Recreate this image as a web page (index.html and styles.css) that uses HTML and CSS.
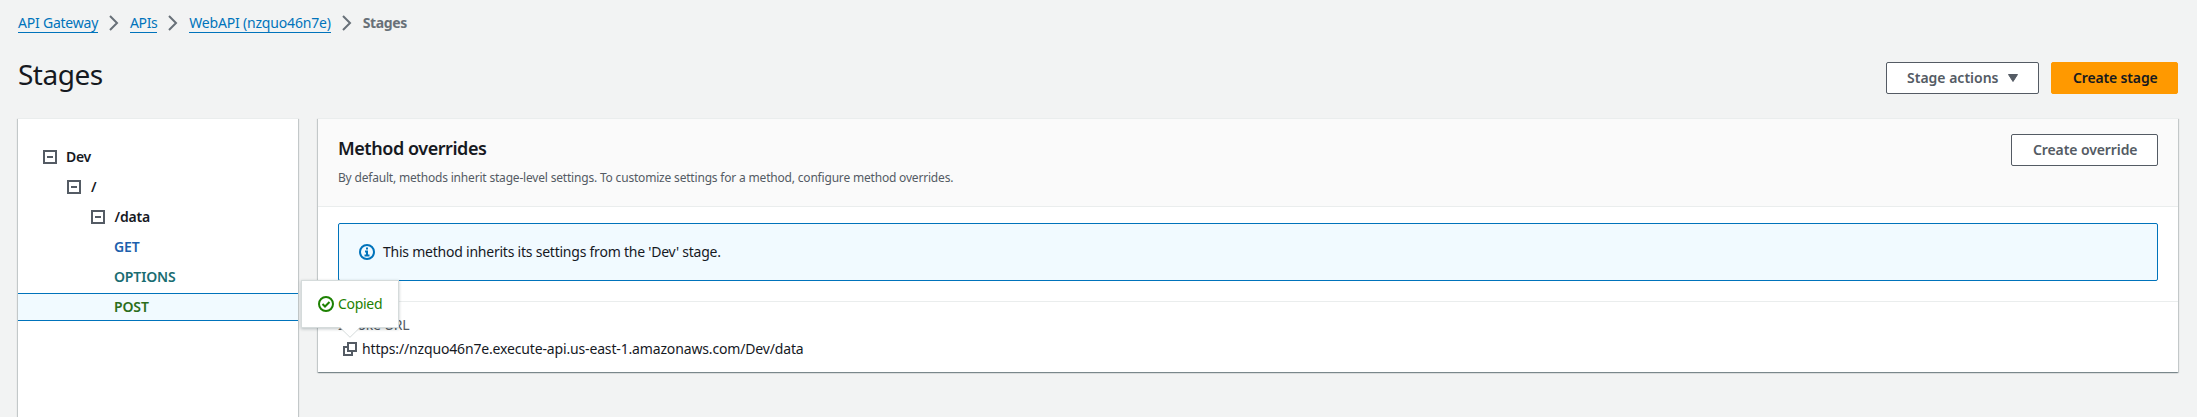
FILE: index.html
```
<!DOCTYPE html>
<html lang="en">
<head>
<meta charset="utf-8">
<title>Stages</title>
<link rel="stylesheet" href="styles.css">
</head>
<body>
<nav class="crumbs">
  <a class="c1" href="#">API Gateway</a>
  <svg class="chev" viewBox="0 0 10 16"><path d="M1 1l7 7-7 7"/></svg>
  <a class="c2" href="#">APIs</a>
  <svg class="chev" viewBox="0 0 10 16"><path d="M1 1l7 7-7 7"/></svg>
  <a class="c3" href="#">WebAPI (nzquo46n7e)</a>
  <svg class="chev" viewBox="0 0 10 16"><path d="M1 1l7 7-7 7"/></svg>
  <span class="current">Stages</span>
</nav>
<header class="page-head">
  <h1 class="title">Stages</h1>
  <div class="actions">
    <button class="btn btn-actions">Stage actions<svg class="caret" viewBox="0 0 10 8"><path d="M.5.5h9L5 7.500z"/></svg></button>
    <button class="btn primary">Create stage</button>
  </div>
</header>
<div class="columns">
  <aside class="panel tree">
    <div class="node d0"><svg class="toggle" viewBox="0 0 14 14"><path d="M1 1h12v12H1zM4 7h6"/></svg><span class="t-dev">Dev</span></div>
    <div class="node d1"><svg class="toggle" viewBox="0 0 14 14"><path d="M1 1h12v12H1zM4 7h6"/></svg><span>/</span></div>
    <div class="node d2"><svg class="toggle" viewBox="0 0 14 14"><path d="M1 1h12v12H1zM4 7h6"/></svg><span class="t-data">/data</span></div>
    <div class="node leaf get">GET</div>
    <div class="node leaf options">OPTIONS</div>
    <div class="node leaf post">POST</div>
  </aside>
  <main class="panel detail">
    <div class="detail-head">
      <div>
        <h2 class="subtitle">Method overrides</h2>
        <p class="desc">By default, methods inherit stage-level settings. To customize settings for a method, configure method overrides.</p>
      </div>
      <button class="btn override">Create override</button>
    </div>
    <div class="alert">
      <svg class="info" viewBox="0 0 16 16"><circle cx="8" cy="8" r="7"/><path d="M8 3.500v2M6 7.500h2V11.500M5.500 11.500h5"/></svg>
      <span class="alert-text">This method inherits its settings from the 'Dev' stage.</span>
    </div>
    <div class="invoke">
      <div class="label">Invoke URL</div>
      <div class="url">
        <span class="copy">
          <svg class="copy-icon" viewBox="0 0 14 14"><path d="M5 1h8v8H5zM5 5H1v8h8V9"/></svg>
          <span class="tooltip">
            <svg class="check" viewBox="0 0 16 16"><circle cx="8" cy="8" r="7"/><path d="M4.500 8l2.500 2.500 4.500-4.500"/></svg>
            <span class="copied">Copied</span>
            <svg class="arrow" viewBox="0 0 20 11"><path class="fill" d="M0 0h20L10 10z"/><path class="edge" d="M0 .5L10 10.300 20 .5"/></svg>
          </span>
        </span>
        <span class="url-text">https://nzquo46n7e.execute-api.us-east-1.amazonaws.com/Dev/data</span>
      </div>
    </div>
  </main>
</div>
</body>
</html>
```
FILE: styles.css
```
* { box-sizing: border-box; }
body { margin: 0; height: 417px; overflow: hidden; background: #f2f3f3; color: #16191f; font: 14px/22px "Noto Sans", sans-serif; }
.crumbs { display: flex; align-items: center; height: 46px; padding-left: 18px; }
.crumbs a { height: 20px; line-height: 20px; color: #0073bb; text-decoration: none; border-bottom: 1px solid #0073bb; white-space: nowrap; }
.c1 { letter-spacing: -.22px; }
.c2 { letter-spacing: -.45px; }
.c3 { letter-spacing: -.18px; }
.chev { width: 10px; height: 16px; margin: 0 11px; fill: none; stroke: #687078; stroke-width: 2; }
.current { color: #687078; font-weight: 700; line-height: 20px; letter-spacing: -.4px; }
.page-head { display: flex; justify-content: space-between; padding: 10px 19px 0 18px; height: 72px; }
.title { margin: 0; font-size: 28px; font-weight: 400; line-height: 36px; letter-spacing: -.5px; }
.actions { display: flex; gap: 12px; padding-top: 6px; }
.btn { display: flex; align-items: center; height: 32px; padding: 0 20px; border: 1px solid #545b64; border-radius: 2px; background: #fff; color: #545b64; font: 600 14px/20px "Noto Sans", sans-serif; white-space: nowrap; }
.btn-actions { width: 153px; }
.primary { width: 127px; border-color: #f90; background: #f90; color: #16191f; padding: 0 21px; letter-spacing: -.15px; }
.override { width: 147px; padding: 0 21px; letter-spacing: -.1px; }
.caret { width: 10px; height: 8px; margin-left: auto; fill: #545b64; stroke: #545b64; }
.columns { display: flex; gap: 20px; padding: 0 19px 0 18px; }
.panel { background: #fff; box-shadow: 0 1px 1px rgba(0,28,36,.3), 1px 1px 1px rgba(0,28,36,.15), -1px 1px 1px rgba(0,28,36,.15); border-top: 1px solid #eaeded; }
.tree { width: 280px; height: 299px; padding-top: 23px; }
.node { display: flex; align-items: center; height: 30px; font-weight: 600; letter-spacing: -.15px; }
.toggle { width: 14px; height: 14px; margin-right: 10px; fill: none; stroke: #545b64; stroke-width: 2; }
.t-dev { margin-left: -1px; letter-spacing: -.3px; }
.t-data { margin-left: -.5px; letter-spacing: -.2px; }
.d0 { padding-left: 25px; }
.d1 { padding-left: 49px; }
.d2 { padding-left: 73px; }
.leaf { padding-left: 96px; }
.get { color: #1c5fac; }
.options { color: #1a6d72; }
.post { height: 28px; margin-top: 1px; border: solid #0073bb; border-width: 1px 0; background: #f1faff; color: #2b6e1b; }
.detail { flex: 1; height: 254px; }
.detail-head { display: flex; justify-content: space-between; height: 88px; padding: 15px 20px 0; background: #fafafa; border-bottom: 1px solid #eaeded; }
.subtitle { margin: 0; font-size: 18px; line-height: 28px; font-weight: 600; letter-spacing: -.45px; }
.desc { margin: 7px 0 0; font-size: 12px; line-height: 18px; color: #545b64; white-space: nowrap; letter-spacing: -.188px; }
.alert { display: flex; align-items: center; gap: 8px; height: 58px; margin: 16px 20px 20px; padding-left: 20px; border: 1px solid #0073bb; border-radius: 2px; background: #f1faff; }
.alert-text { letter-spacing: -.23px; }
.info { width: 16px; height: 16px; fill: none; stroke: #0073bb; stroke-width: 2; }
.invoke { border-top: 1px solid #eaeded; padding: 12px 20px 0; }
.label { line-height: 22px; color: #545b64; letter-spacing: -.3px; }
.url { display: flex; align-items: center; height: 26px; padding-left: 5px; gap: 5px; white-space: nowrap; }
.url-text { letter-spacing: -.155px; }
.copy { position: relative; display: flex; }
.copy-icon { width: 14px; height: 14px; fill: none; stroke: #545b64; stroke-width: 2; }
.tooltip { position: absolute; left: -42px; bottom: 28px; display: flex; align-items: center; gap: 4px; width: 98px; height: 48px; padding-left: 16px; background: #fff; border: 1px solid #d5dbdb; box-shadow: 0 1px 3px rgba(0,28,36,.25); color: #1d8102; }
.copied { letter-spacing: -.3px; }
.check { width: 16px; height: 16px; fill: none; stroke: #1d8102; stroke-width: 2; }
.arrow { position: absolute; left: 38px; top: 46px; width: 20px; height: 11px; }
.fill { fill: #fff; }
.edge { fill: none; stroke: #d5dbdb; }
```
